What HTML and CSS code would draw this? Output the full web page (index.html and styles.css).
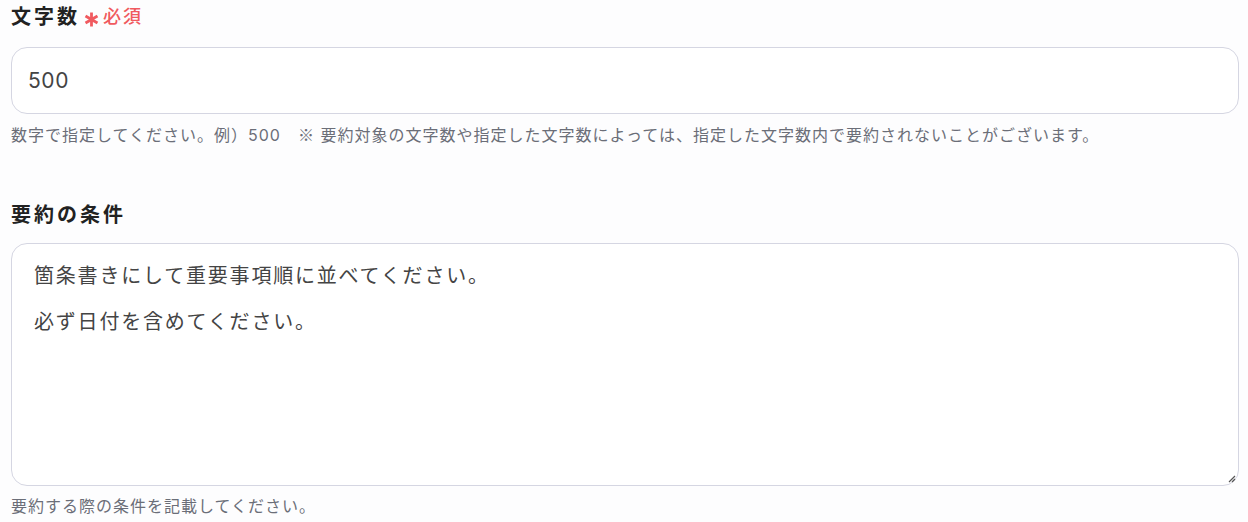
FILE: index.html
```html
<!DOCTYPE html>
<html lang="ja">
<head>
<meta charset="utf-8">
<link rel="stylesheet" href="styles.css">
</head>
<body>
<div class="form">
  <div class="field">
    <div class="label">文字数<span class="req"><svg class="star" width="15" height="15" viewBox="0 0 14 14"><path d="M7 0.5 V13.5 M1.4 3.75 L12.6 10.25 M1.4 10.25 L12.6 3.75" stroke="#f05a5f" stroke-width="2.6" fill="none"/></svg>必須</span></div>
    <div class="input">500</div>
    <div class="help">数字で指定してください。例）500　<span class="cjk">※</span> 要約対象の文字数や指定した文字数によっては、指定した文字数内で要約されないことがございます。</div>
  </div>
  <div class="field second">
    <div class="label">要約の条件</div>
    <div class="textarea">
      <div class="line">箇条書きにして重要事項順に並べてください。</div>
      <div class="line">必ず日付を含めてください。</div>
      <svg class="grip" width="10" height="10" viewBox="0 0 10 10"><path d="M9 3 L3 9 M9 6 L6 9" stroke="#555" stroke-width="1.2" fill="none"/></svg>
    </div>
    <div class="help">要約する際の条件を記載してください。</div>
  </div>
</div>
</body>
</html>
```
FILE: styles.css
```css
html, body {
  margin: 0;
  padding: 0;
  background: #fdfdfe;
}
body {
  font-family: "Inter", "Noto Sans CJK JP", sans-serif;
  color: #333;
}
.form {
  padding: 3px 9px 0 11px;
}
.field {
  display: flex;
  flex-direction: column;
}
.second {
  margin-top: 55px;
}
.label {
  font-size: 20px;
  font-weight: 700;
  color: #222;
  line-height: 28px;
  letter-spacing: 3px;
  display: flex;
  align-items: center;
}
.req {
  color: #f05a5f;
  font-size: 18px;
  font-weight: 500;
  letter-spacing: 2px;
  margin-left: 4px;
  display: flex;
  align-items: center;
}
.star {
  margin-top: 4px;
  margin-right: 4px;
}
.cjk {
  font-family: "Noto Sans CJK JP", sans-serif;
}
.input {
  box-sizing: border-box;
  margin-top: 16px;
  height: 67px;
  border: 1px solid #d5d6e2;
  border-radius: 16px;
  background: #fff;
  display: flex;
  align-items: center;
  padding-left: 16px;
  font-size: 21px;
  color: #444;
  letter-spacing: 0.6px;
}
.help {
  margin-top: 9px;
  font-size: 16px;
  color: #6b6e78;
  line-height: 22px;
  letter-spacing: 1px;
}
.textarea {
  box-sizing: border-box;
  margin-top: 14px;
  height: 243px;
  border: 1px solid #d5d6e2;
  border-radius: 16px;
  background: #fff;
  padding: 9px 22px;
  position: relative;
  font-size: 20px;
  letter-spacing: 1.8px;
  color: #444;
}
.line {
  line-height: 46px;
}
.grip {
  position: absolute;
  right: 2px;
  bottom: 2px;
}
```
